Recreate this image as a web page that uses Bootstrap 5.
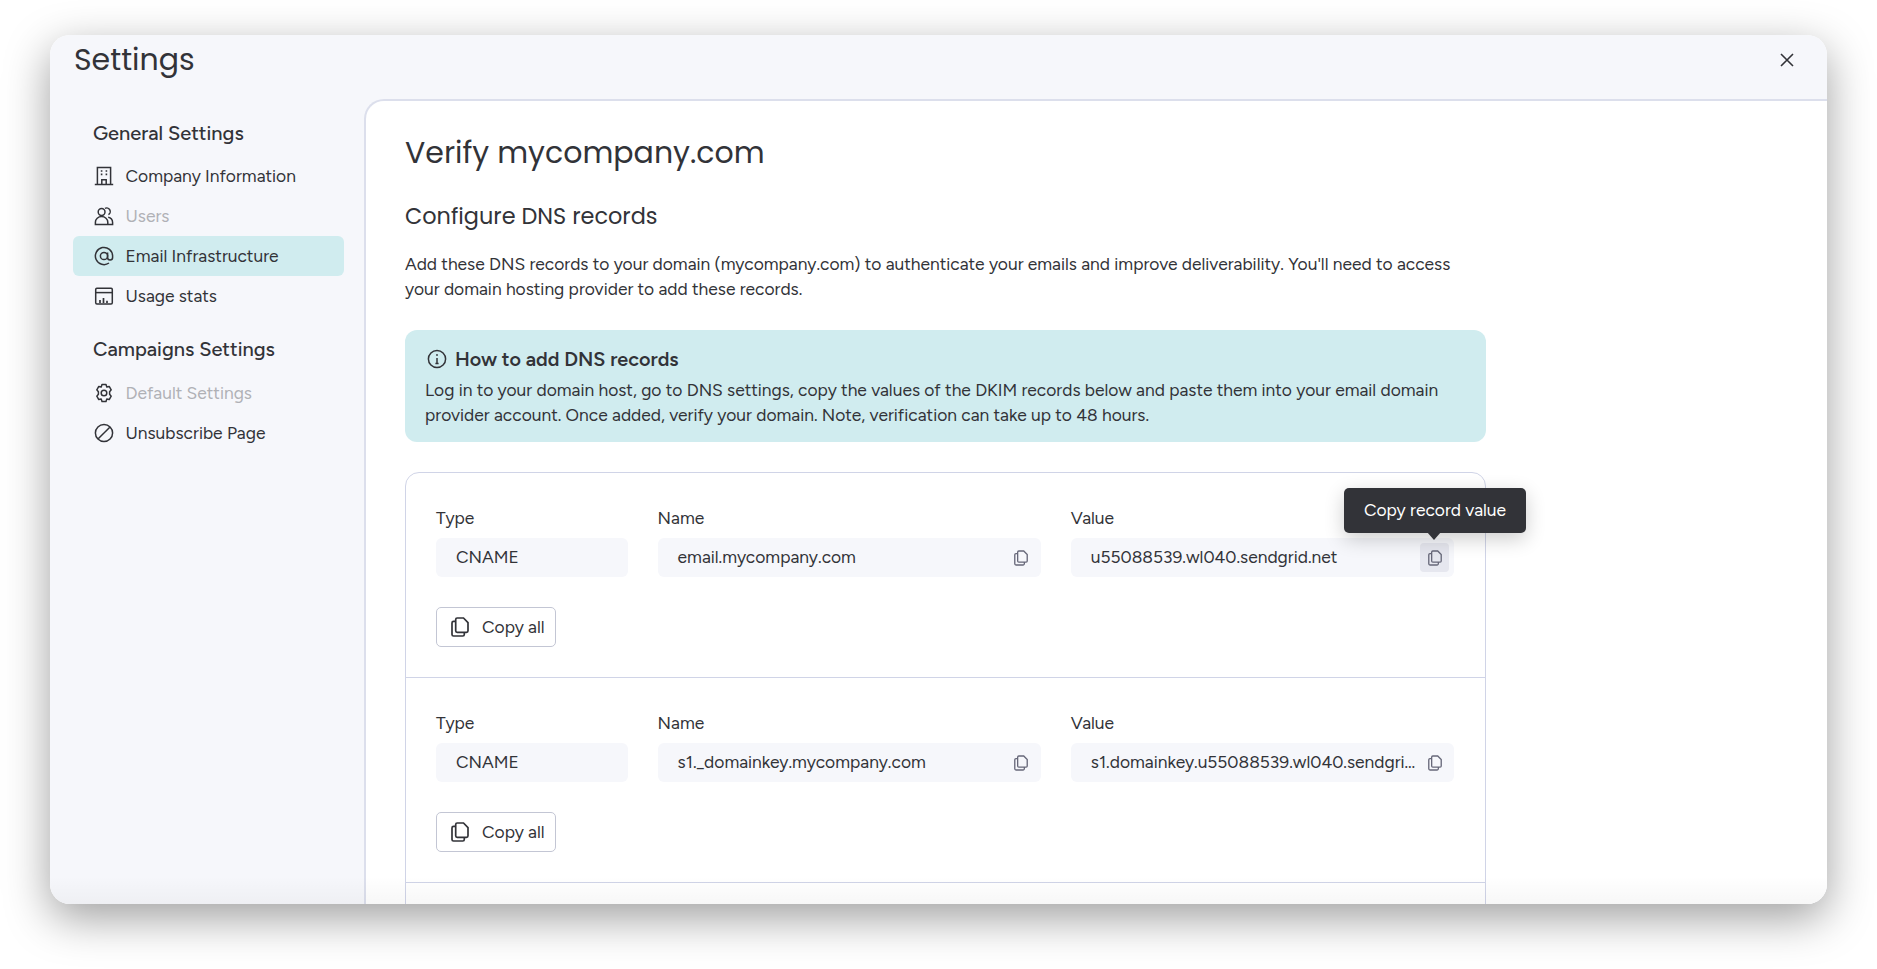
<!DOCTYPE html>
<html lang="en">
<head>
    <meta charset="UTF-8">
    <meta name="viewport" content="width=device-width, initial-scale=1.0">
    <title>Settings</title>
    <link href="https://cdn.jsdelivr.net/npm/bootstrap@5.3.0/dist/css/bootstrap.min.css" rel="stylesheet">
    <style>
        html, body {
            height: 100%;
        }
        body {
            background: #fff;
            overflow: hidden;
            padding: 35px 50px 65px;
            font-family: "Figtree", "Inter", "Noto Sans", sans-serif;
            font-size: 17.4px;
            color: #323338;
        }
        .heading-font {
            font-family: "Poppins", "Lato", "Noto Sans", sans-serif;
        }
        .settings-window {
            height: 100%;
            position: relative;
            background: #f6f7fb;
            border-radius: 20px;
            overflow: hidden;
        }
        .window-shadow {
            height: 100%;
            border-radius: 20px;
            box-shadow: 0 14px 45px rgba(0, 0, 0, .38);
        }
        .window-head {
            height: 64px;
            padding: 0 33px 14px 24px;
        }
        .window-title {
            font-size: 30px;
            font-weight: 400;
            margin: 0;
        }
        .close-btn {
            background: none;
            border: 0;
            padding: 0;
            line-height: 0;
        }
        .side-panel {
            width: 314px;
            padding: 17px 20px 0 23px;
            flex-shrink: 0;
        }
        .side-title {
            font-size: 20px;
            font-weight: 500;
            margin: 0 0 6px 20px;
            line-height: 34px;
        }
        .side-group + .side-group .side-title {
            margin-bottom: 7px;
        }
        .side-link {
            height: 40px;
            display: flex;
            align-items: center;
            gap: 11.5px;
            padding-left: 21px;
            border-radius: 6px;
            color: #323338;
            text-decoration: none;
        }
        .side-link.is-active {
            background: #d0ecef;
        }
        .side-link.is-off span {
            color: #b0b1b6;
        }
        .side-group {
            margin-bottom: 16px;
        }
        .main-panel {
            background: #fff;
            border-top: 2px solid #dcdfec;
            border-left: 2px solid #dcdfec;
            border-top-left-radius: 20px;
            padding: 28px 0 0 39px;
        }
        .main-inner {
            width: 1081px;
        }
        .page-title {
            font-size: 30px;
            font-weight: 400;
            margin: 0 0 22px;
            line-height: 48px;
        }
        .sub-title {
            font-size: 22.4px;
            font-weight: 400;
            margin: 0 0 18px;
            line-height: 34px;
        }
        .intro-text {
            line-height: 25px;
            margin: -0.5px 0 29.5px;
        }
        .how-box {
            background: #d0ecef;
            border-radius: 12px;
            padding: 14px 20px 15px;
            line-height: 25px;
            margin-bottom: 30px;
        }
        .how-title {
            font-size: 19.8px;
            font-weight: 600;
            margin: 0 0 3px 2px;
            line-height: 30px;
        }
        .record-card {
            border: 1.5px solid #d0d4e7;
            border-radius: 14px 14px 0 0;
            height: 600px;
        }
        .record-row {
            padding: 30px 31px 30px 30px;
            border-bottom: 1.5px solid #d0d4e7;
        }
        .record-grid {
            display: grid;
            grid-template-columns: minmax(0, 1fr) minmax(0, 2fr) minmax(0, 2fr);
            gap: 30px;
            margin-bottom: 30px;
        }
        .field-label {
            line-height: 25px;
            margin: 2px 0 8px;
        }
        .field-box {
            height: 39px;
            background: #f6f7fb;
            border-radius: 6px;
            padding: 0 5px 0 20px;
            gap: 6px;
        }
        .field-text {
            white-space: nowrap;
            min-width: 0;
        }
        .copy-btn {
            width: 29px;
            height: 29px;
            flex-shrink: 0;
            border: 0;
            padding: 0;
            background: none;
            border-radius: 4px;
            color: #676879;
        }
        .copy-btn.is-hover {
            background: #e6e7ef;
        }
        .copy-all {
            width: 120px;
            height: 40px;
            padding: 0 0 0 14px;
            gap: 13px;
            font-size: 17.4px;
            color: #323338;
            border: 1.5px solid #c3c6d4;
            border-radius: 5px;
            background: #fff;
        }
        .copy-tip {
            position: absolute;
            top: 488px;
            left: 1344px;
            width: 182px;
            height: 45px;
            background: #323338;
            color: #fff;
            border-radius: 5px;
            box-shadow: 0 6px 20px rgba(0, 0, 0, .2);
            z-index: 5;
        }
        .copy-tip::after {
            content: "";
            position: absolute;
            left: 83px;
            top: 44px;
            border: 7px solid transparent;
            border-bottom: 0;
            border-top: 8px solid #323338;
        }
        .bottom-fade {
            position: absolute;
            left: 0;
            right: 0;
            bottom: 0;
            height: 28px;
            background: linear-gradient(rgba(0, 0, 0, 0), rgba(0, 0, 0, .03));
            pointer-events: none;
        }
    </style>
</head>
<body>
    <svg width="0" height="0" class="d-block position-absolute">
        <symbol id="ic-copy" viewBox="0 0 18 20">
            <path d="M6.2 1h6.3L17 5.6v8.2a1.5 1.5 0 0 1-1.5 1.5H6.2a1.5 1.5 0 0 1-1.5-1.5V2.5A1.5 1.5 0 0 1 6.2 1Z" fill="none" stroke="currentColor" stroke-width="1.7"/>
            <path d="M4.7 4.4H2.5A1.5 1.5 0 0 0 1 5.9v11.6A1.5 1.5 0 0 0 2.5 19h9.3a1.5 1.5 0 0 0 1.5-1.5v-2.2" fill="none" stroke="currentColor" stroke-width="1.7"/>
        </symbol>
    </svg>

    <div class="window-shadow">
    <div class="settings-window d-flex flex-column">
        <div class="window-head d-flex justify-content-between align-items-center flex-shrink-0">
            <h1 class="window-title heading-font">Settings</h1>
            <button class="close-btn" aria-label="Close">
                <svg width="14" height="14" viewBox="0 0 14 14"><path d="M1 1l12 12M13 1L1 13" stroke="#323338" stroke-width="1.6"/></svg>
            </button>
        </div>

        <div class="d-flex flex-grow-1">
            <div class="side-panel">
                <div class="side-group">
                    <h2 class="side-title">General Settings</h2>
                    <a class="side-link" href="#">
                        <svg width="20" height="20" viewBox="0 0 20 20" fill="none" stroke="#323338" stroke-width="1.5"><path d="M.8 18.6h18.4M3.4 18.6V1.6h13.2v17M7.8 18.6v-4.8h4.4v4.8"/><path d="M6.8 5h1.6M11.6 5h1.6M6.8 8.4h1.6M11.6 8.4h1.6" stroke-width="1.7"/></svg>
                        <span>Company Information</span>
                    </a>
                    <a class="side-link is-off" href="#">
                        <svg width="20" height="20" viewBox="0 0 20 20" fill="none" stroke="#323338" stroke-width="1.5"><circle cx="7.6" cy="6" r="3.4"/><path d="M1.4 18.6v-2.4a6.2 5.6 0 0 1 12.4 0v2.4ZM11 2.4a3.2 3.2 0 0 1 3.4 6.2M14.2 11.2a5.4 5.4 0 0 1 4.4 5.2v2.2h-4.8"/></svg>
                        <span>Users</span>
                    </a>
                    <a class="side-link is-active" href="#">
                        <svg width="20" height="20" viewBox="0 0 20 20" fill="none" stroke="#323338" stroke-width="1.5"><circle cx="10" cy="10" r="3.6"/><path d="M13.6 6.6v5a2.5 2.5 0 0 0 5 0V10a8.6 8.6 0 1 0-3.6 7"/></svg>
                        <span>Email Infrastructure</span>
                    </a>
                    <a class="side-link" href="#">
                        <svg width="20" height="20" viewBox="0 0 20 20" fill="none" stroke="#323338" stroke-width="1.5"><rect x="1.7" y="2.2" width="16.6" height="15.8" rx="1.2"/><path d="M1.7 6.6h16.6"/><path d="M6 17v-3M9.5 17v-5M13 17v-2.2" stroke-width="1.7"/></svg>
                        <span>Usage stats</span>
                    </a>
                </div>
                <div class="side-group">
                    <h2 class="side-title">Campaigns Settings</h2>
                    <a class="side-link is-off" href="#">
                        <svg width="20" height="20" viewBox="0 0 20 20" fill="none" stroke="#323338" stroke-width="1.5" stroke-linejoin="round"><circle cx="10" cy="10" r="2.8"/><path d="M8 1.6h4l.8 2.4 2.4-.6 2 3.4-1.6 1.9v2.6l1.6 1.9-2 3.4-2.4-.6-.8 2.4H8l-.8-2.4-2.4.6-2-3.4 1.6-1.9V8.7L2.8 6.8l2-3.4 2.4.6Z"/></svg>
                        <span>Default Settings</span>
                    </a>
                    <a class="side-link" href="#">
                        <svg width="20" height="20" viewBox="0 0 20 20" fill="none" stroke="#323338" stroke-width="1.5"><circle cx="10" cy="10" r="8.6"/><path d="M15.8 4.2L4.2 15.8"/></svg>
                        <span>Unsubscribe Page</span>
                    </a>
                </div>
            </div>

            <div class="main-panel flex-grow-1">
                <div class="main-inner">
                    <h2 class="page-title heading-font">Verify mycompany.com</h2>
                    <h3 class="sub-title heading-font">Configure DNS records</h3>
                    <p class="intro-text">Add these DNS records to your domain (mycompany.com) to authenticate your emails and improve deliverability. You'll need to access your domain hosting provider to add these records.</p>

                    <div class="how-box">
                        <div class="how-title d-flex align-items-center gap-2">
                            <svg width="20" height="20" viewBox="0 0 20 20" fill="none" stroke="#323338" stroke-width="1.5"><circle cx="10" cy="10" r="8.6"/><path d="M10 9v5.5M8.4 14.5h3.2"/><circle cx="10" cy="6" r=".9" fill="#323338" stroke="none"/></svg>
                            <span>How to add DNS records</span>
                        </div>
                        Log in to your domain host, go to DNS settings, copy the values of the DKIM records below and paste them into your email domain provider account. Once added, verify your domain. Note, verification can take up to 48 hours.
                    </div>

                    <div class="record-card">
                        <div class="record-row">
                            <div class="record-grid">
                                <div>
                                    <div class="field-label">Type</div>
                                    <div class="field-box d-flex align-items-center">CNAME</div>
                                </div>
                                <div>
                                    <div class="field-label">Name</div>
                                    <div class="field-box d-flex align-items-center justify-content-between">
                                        <span class="field-text">email.mycompany.com</span>
                                        <button class="copy-btn d-flex align-items-center justify-content-center"><svg width="14" height="16"><use href="#ic-copy"/></svg></button>
                                    </div>
                                </div>
                                <div>
                                    <div class="field-label">Value</div>
                                    <div class="field-box d-flex align-items-center justify-content-between">
                                        <span class="field-text">u55088539.wl040.sendgrid.net</span>
                                        <button class="copy-btn is-hover d-flex align-items-center justify-content-center"><svg width="14" height="16"><use href="#ic-copy"/></svg></button>
                                    </div>
                                </div>
                            </div>
                            <button class="copy-all d-flex align-items-center"><svg width="18" height="20"><use href="#ic-copy"/></svg>Copy all</button>
                        </div>
                        <div class="record-row">
                            <div class="record-grid">
                                <div>
                                    <div class="field-label">Type</div>
                                    <div class="field-box d-flex align-items-center">CNAME</div>
                                </div>
                                <div>
                                    <div class="field-label">Name</div>
                                    <div class="field-box d-flex align-items-center justify-content-between">
                                        <span class="field-text">s1._domainkey.mycompany.com</span>
                                        <button class="copy-btn d-flex align-items-center justify-content-center"><svg width="14" height="16"><use href="#ic-copy"/></svg></button>
                                    </div>
                                </div>
                                <div>
                                    <div class="field-label">Value</div>
                                    <div class="field-box d-flex align-items-center justify-content-between">
                                        <span class="field-text">s1.domainkey.u55088539.wl040.sendgri…</span>
                                        <button class="copy-btn d-flex align-items-center justify-content-center"><svg width="14" height="16"><use href="#ic-copy"/></svg></button>
                                    </div>
                                </div>
                            </div>
                            <button class="copy-all d-flex align-items-center"><svg width="18" height="20"><use href="#ic-copy"/></svg>Copy all</button>
                        </div>
                    </div>
                </div>
            </div>
        </div>
        <div class="bottom-fade"></div>
    </div>
    </div>

    <div class="copy-tip d-flex align-items-center justify-content-center">Copy record value</div>

    <script src="https://cdn.jsdelivr.net/npm/bootstrap@5.3.0/dist/js/bootstrap.bundle.min.js"></script>
</body>
</html>
